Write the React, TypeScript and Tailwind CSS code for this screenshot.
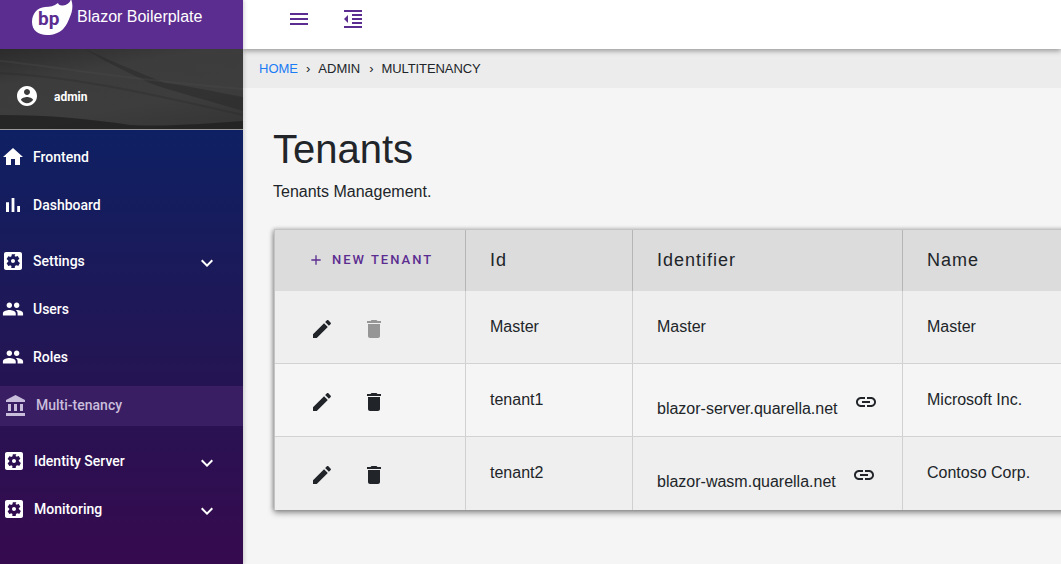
import React from "react";

const P = {
  menu: "M3 18h18v-2H3v2zm0-5h18v-2H3v2zm0-7v2h18V6H3z",
  indent: "M11 17h10v-2H11v2zm-8-5l4 4V8l-4 4zm0 9h18v-2H3v2zM3 3v2h18V3H3zm8 6h10V7H11v2zm0 4h10v-2H11v2z",
  home: "M10 20v-6h4v6h5v-8h3L12 3 2 12h3v8z",
  bar: "M5 9.2h3V19H5zM10.6 5h2.8v14h-2.8zm5.6 8H19v6h-2.8z",
  settings:
    "M12 10c-1.1 0-2 .9-2 2s.9 2 2 2 2-.9 2-2-.9-2-2-2zm7-7H5c-1.11 0-2 .9-2 2v14c0 1.1.89 2 2 2h14c1.11 0 2-.9 2-2V5c0-1.1-.89-2-2-2zm-1.75 9c0 .23-.02.46-.05.68l1.48 1.16c.13.11.17.3.08.45l-1.4 2.42c-.09.15-.27.21-.43.15l-1.74-.7c-.36.28-.76.51-1.18.69l-.26 1.85c-.03.17-.18.3-.35.3h-2.8c-.17 0-.32-.13-.35-.3L10.5 17c-.43-.18-.82-.41-1.18-.69l-1.74.7c-.16.06-.34 0-.43-.15l-1.4-2.42c-.09-.15-.05-.34.08-.45l1.48-1.16c-.03-.22-.05-.45-.05-.68 0-.23.02-.46.05-.68l-1.48-1.16c-.13-.11-.17-.3-.08-.45l1.4-2.42c.09-.15.27-.21.43-.15l1.74.7c.36-.28.76-.51 1.18-.69l.26-1.85c.03-.17.18-.3.35-.3h2.8c.17 0 .32.13.35.3L13.5 7c.43.18.82.41 1.18.69l1.74-.7c.16-.06.34 0 .43.15l1.4 2.42c.09.15.05.34-.08.45l-1.48 1.16c.03.22.05.45.05.68z",
  people:
    "M16 11c1.66 0 2.99-1.34 2.99-3S17.66 5 16 5c-1.66 0-3 1.34-3 3s1.34 3 3 3zm-8 0c1.66 0 2.99-1.34 2.99-3S9.66 5 8 5C6.34 5 5 6.34 5 8s1.34 3 3 3zm0 2c-2.33 0-7 1.17-7 3.5V19h14v-2.5c0-2.33-4.67-3.5-7-3.5zm8 0c-.29 0-.62.02-.97.05 1.16.84 1.97 1.97 1.97 3.45V19h6v-2.5c0-2.33-4.67-3.5-7-3.5z",
  bank: "M4 10v7h3v-7H4zm6 0v7h3v-7h-3zM2 22h19v-3H2v3zm14-12v7h3v-7h-3zm-4.5-9L2 6v2h19V6l-9.5-5z",
  expand: "M16.59 8.59L12 13.17 7.41 8.59 6 10l6 6 6-6z",
  account:
    "M12 2C6.48 2 2 6.48 2 12s4.48 10 10 10 10-4.48 10-10S17.52 2 12 2zm0 3c1.66 0 3 1.34 3 3s-1.34 3-3 3-3-1.34-3-3 1.34-3 3-3zm0 14.2c-2.5 0-4.71-1.28-6-3.22.03-1.99 4-3.08 6-3.08 1.99 0 5.97 1.09 6 3.08-1.29 1.94-3.5 3.22-6 3.22z",
  edit: "M3 17.25V21h3.75L17.81 9.94l-3.75-3.75L3 17.25zM20.71 7.04c.39-.39.39-1.02 0-1.41l-2.34-2.34c-.39-.39-1.02-.39-1.41 0l-1.83 1.83 3.75 3.75 1.83-1.83z",
  trash: "M6 19c0 1.1.9 2 2 2h8c1.1 0 2-.9 2-2V7H6v12zM19 4h-3.5l-1-1h-5l-1 1H5v2h14V4z",
  link: "M3.9 12c0-1.71 1.39-3.1 3.1-3.1h4V7H7c-2.76 0-5 2.24-5 5s2.24 5 5 5h4v-1.9H7c-1.71 0-3.1-1.39-3.1-3.1zM8 13h8v-2H8v2zm9-6h-4v1.9h4c1.71 0 3.1 1.39 3.1 3.1s-1.39 3.1-3.1 3.1h-4V17h4c2.76 0 5-2.24 5-5s-2.24-5-5-5z",
  add: "M19 13h-6v6h-2v-6H5v-2h6V5h2v6h6v2z",
};

function Icon({ d, className }: { d: string; className?: string }) {
  return (
    <svg viewBox="0 0 24 24" fill="currentColor" className={className}>
      <path d={d} />
    </svg>
  );
}

function Logo() {
  return (
    <svg viewBox="0 0 44 36" className="w-[44px] h-[36px] shrink-0">
      <path
        d="M2 22C2 13 8 7.500 15 7C20 7 24 6 28 3C28.500 4.500 30 6 33 5.500C37 5 40 3 41 -1C43.500 5 42.500 12 39.500 18C36 27 31 35 17 35C8 35 2 30 2 22Z"
        fill="#fff"
      />
      <text x="8" y="25" fill="#5c2d91" fontSize="19" fontWeight="700" fontFamily="Roboto, sans-serif">
        bp
      </text>
    </svg>
  );
}

function NavItem({
  icon,
  label,
  chevron,
  textClass,
  iconClass = "w-6 h-6",
}: {
  icon: string;
  label: string;
  chevron?: boolean;
  textClass: string;
  iconClass?: string;
}) {
  return (
    <div className="flex items-center h-12 pl-px text-white">
      <Icon d={icon} className={`shrink-0 ${iconClass}`} />
      <span className={`text-[14px] font-medium ${textClass}`}>{label}</span>
      {chevron && <Icon d={P.expand} className="w-6 h-6 ml-auto mr-6 mt-[4px]" />}
    </div>
  );
}

function Sidebar() {
  const peopleIcon = "w-[22px] h-[22px] ml-px mr-px";
  const shifted = "w-6 h-6 ml-px";
  return (
    <aside className="relative z-20 w-[243px] shrink-0 flex flex-col font-['Roboto',sans-serif] h-full shadow-[1px_0_4px_rgba(0,0,0,0.18)]">
      <div className="h-[49px] bg-[#5c2d91] flex items-start pl-[30px] text-white overflow-hidden">
        <Logo />
        <span className="text-[16px] leading-[18px] mt-[8px] ml-[3px] font-['Liberation_Sans',sans-serif]">Blazor Boilerplate</span>
      </div>
      <div className="relative h-[81px] border-b border-[#9a9a9a] bg-[linear-gradient(170deg,#2b2b2b_0%,#3c3c3c_30%,#3d3d3d_65%,#343434_100%)] flex items-center pl-[15px] pt-[14px] overflow-hidden">
        <svg viewBox="0 0 243 80" preserveAspectRatio="none" className="absolute inset-0 w-full h-full">
          <path d="M85 0C115 14 140 24 165 34C195 38 220 44 243 48V62C205 50 170 42 150 34C125 22 100 10 85 0Z" fill="#252525" opacity=".45" />
          <path d="M0 12C60 18 120 30 243 40" stroke="#4a4a4a" strokeWidth="2" fill="none" opacity=".35" />
          <path d="M0 24C70 28 130 40 243 66" stroke="#2a2a2a" strokeWidth="2" fill="none" opacity=".35" />
          <path d="M0 66C50 66 90 70 130 76C170 78 210 74 243 72V80H0Z" fill="#1f1f1f" opacity=".75" />
        </svg>
        <Icon d={P.account} className="relative w-6 h-6 text-white" />
        <span className="relative ml-[15px] mt-[2px] text-[12px] font-bold text-white">admin</span>
      </div>
      <nav className="flex-1 pt-[3px] bg-[linear-gradient(180deg,#0e2063_0%,#221655_50%,#360a4e_100%)]">
        <NavItem icon={P.home} label="Frontend" textClass="ml-2" />
        <NavItem icon={P.bar} label="Dashboard" textClass="ml-2" />
        <div className="h-2" />
        <NavItem icon={P.settings} label="Settings" chevron textClass="ml-2" />
        <NavItem icon={P.people} label="Users" textClass="ml-2" iconClass={peopleIcon} />
        <NavItem icon={P.people} label="Roles" textClass="ml-2" iconClass={peopleIcon} />
        <div className="h-[5px]" />
        <div className="flex items-center h-10 pl-[4px] bg-[#3a1e63] text-[#c9bddc]">
          <Icon d={P.bank} className="w-6 h-6 shrink-0" />
          <span className="text-[14px] font-medium ml-2 -mt-[1px]">Multi-tenancy</span>
        </div>
        <div className="h-[11px]" />
        <NavItem icon={P.settings} label="Identity Server" chevron textClass="ml-2" iconClass={shifted} />
        <NavItem icon={P.settings} label="Monitoring" chevron textClass="ml-2" iconClass={shifted} />
      </nav>
    </aside>
  );
}

const cols = "grid grid-cols-[191px_167px_270px_1fr]";

function Row({
  shade,
  trash,
  id,
  identifier,
  name,
  link,
  last,
}: {
  shade: string;
  trash: string;
  id: string;
  identifier: string;
  name: string;
  link?: string;
  last?: boolean;
}) {
  const cell = "border-r border-[#d0d0d0] pl-6 pt-[25px] text-[16px] leading-[22px]";
  return (
    <div className={`${cols} h-[73px] ${shade} ${last ? "" : "border-b border-[#d2d2d2]"}`}>
      <div className="border-r border-[#d0d0d0] flex items-center gap-[28px] pl-[35px] pt-[3px] text-[#212529]">
        <Icon d={P.edit} className="w-6 h-6" />
        <Icon d={P.trash} className={`w-6 h-6 ${trash}`} />
      </div>
      <div className={cell}>{id}</div>
      {link ? (
        <div className="border-r border-[#d0d0d0] pl-6 relative">
          <span className="block mt-[34px] text-[16px] leading-[22px]">{identifier}</span>
          <Icon d={P.link} className={`absolute top-[26px] w-6 h-6 ${link}`} />
        </div>
      ) : (
        <div className={cell}>{identifier}</div>
      )}
      <div className="pl-6 pt-[25px] text-[16px] leading-[22px]">{name}</div>
    </div>
  );
}

export default function App() {
  const head = "flex items-center pl-6 border-r border-[#b5b5b5] text-[18px] tracking-[1px]";
  return (
    <div className="w-[1061px] h-[564px] overflow-hidden flex bg-[#f5f5f5] text-[#212529] font-['Liberation_Sans',Arial,sans-serif]">
      <Sidebar />
      <main className="flex-1 min-w-0 flex flex-col">
        <header className="relative z-10 h-[49px] bg-white shadow-[0_2px_5px_rgba(0,0,0,0.35)] flex items-center pl-[44px] gap-[30px] text-[#5c2d91]">
          <Icon d={P.menu} className="w-6 h-6 -mt-[12px]" />
          <Icon d={P.indent} className="w-6 h-6 -mt-[12px]" />
        </header>
        <div className="h-[39px] bg-[#ececec] flex items-center pl-4 text-[13px]">
          <span className="text-[#1b7cf5]">HOME</span>
          <span className="ml-[8px] mr-[8px]">›</span>
          <span>ADMIN</span>
          <span className="ml-[9px] mr-[8px]">›</span>
          <span className="tracking-[-0.1px]">MULTITENANCY</span>
        </div>
        <div className="pl-[31px] pt-[37px] min-w-0">
          <h1 className="text-[40px] leading-[48px] -ml-px">Tenants</h1>
          <p className="text-[16px] leading-6 mt-[7px] -ml-px">Tenants Management.</p>
          <div className="w-[900px] mt-[25px] border-t border-l border-[#c4c4c4] shadow-[0_3px_6px_rgba(0,0,0,0.4),-1px_0_4px_rgba(0,0,0,0.22)] bg-[#f5f5f5]">
            <div className={`${cols} h-[61px] bg-[#dcdcdc]`}>
              <div className="flex items-center pl-[33px] border-r border-[#b5b5b5] text-[#5c2d91] pb-[2px]">
                <Icon d={P.add} className="w-[16px] h-[16px]" />
                <span className="ml-[8px] text-[13px] font-medium tracking-[2px] font-['Roboto',sans-serif]">NEW TENANT</span>
              </div>
              <div className={head}>Id</div>
              <div className={head}>Identifier</div>
              <div className={`${head} border-r-0`}>Name</div>
            </div>
            <Row shade="bg-[#efefef]" trash="text-[#969696]" id="Master" identifier="Master" name="Master" />
            <Row shade="bg-[#f5f5f5]" trash="" id="tenant1" identifier="blazor-server.quarella.net" name="Microsoft Inc." link="left-[221px]" />
            <Row shade="bg-[#efefef]" trash="" id="tenant2" identifier="blazor-wasm.quarella.net" name="Contoso Corp." link="left-[219px]" last />
          </div>
        </div>
      </main>
    </div>
  );
}
